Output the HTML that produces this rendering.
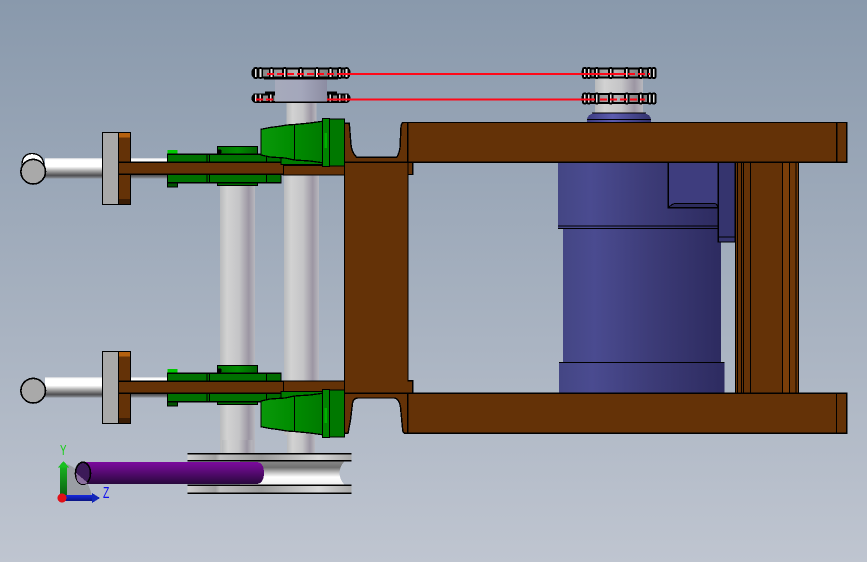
<!DOCTYPE html>
<html><head><meta charset="utf-8"><style>html,body{margin:0;padding:0;width:867px;height:562px;overflow:hidden}svg{display:block}</style></head><body>
<svg width="867" height="562" viewBox="0 0 867 562" xmlns="http://www.w3.org/2000/svg">
<defs>
<linearGradient id="bg" x1="0" y1="0" x2="0" y2="1"><stop offset="0" stop-color="#8999ac"/><stop offset="1" stop-color="#bfc5d0"/></linearGradient>
<linearGradient id="cyl" x1="0" y1="0" x2="1" y2="0"><stop offset="0" stop-color="#b8babc"/><stop offset=".2" stop-color="#d2d2d2"/><stop offset=".55" stop-color="#c4c4c6"/><stop offset=".82" stop-color="#9c96a3"/><stop offset="1" stop-color="#b8b8be"/></linearGradient>
<linearGradient id="hub" x1="0" y1="0" x2="1" y2="0"><stop offset="0" stop-color="#a6aabb"/><stop offset=".5" stop-color="#a4a7bb"/><stop offset="1" stop-color="#8c8ca2"/></linearGradient>
<linearGradient id="shaft" x1="0" y1="0" x2="0" y2="1"><stop offset="0" stop-color="#c8ccd2"/><stop offset=".08" stop-color="#fff"/><stop offset=".42" stop-color="#fff"/><stop offset=".62" stop-color="#aaa"/><stop offset=".85" stop-color="#4e4e50"/><stop offset="1" stop-color="#8d929a"/></linearGradient>
<linearGradient id="blue" x1="0" y1="0" x2="1" y2="0"><stop offset="0" stop-color="#444684"/><stop offset=".2" stop-color="#4a4b90"/><stop offset=".55" stop-color="#3d3c78"/><stop offset="1" stop-color="#2d2b60"/></linearGradient>
<linearGradient id="cap" x1="0" y1="0" x2="1" y2="0"><stop offset="0" stop-color="#3c3c80"/><stop offset=".4" stop-color="#5c5cb0"/><stop offset="1" stop-color="#32326c"/></linearGradient>
<linearGradient id="gr" x1="0" y1="0" x2="1" y2="0"><stop offset="0" stop-color="#0a980a"/><stop offset=".5" stop-color="#008c00"/><stop offset="1" stop-color="#007a00"/></linearGradient>
<linearGradient id="gt" x1="0" y1="0" x2="1" y2="0"><stop offset="0" stop-color="#007000"/><stop offset=".5" stop-color="#008a00"/><stop offset="1" stop-color="#006000"/></linearGradient>
<linearGradient id="pur" x1="0" y1="0" x2="0" y2="1"><stop offset="0" stop-color="#7c0a9e"/><stop offset=".3" stop-color="#660a84"/><stop offset="1" stop-color="#28083c"/></linearGradient>
<linearGradient id="spr" x1="0" y1="0" x2="1" y2="0"><stop offset="0" stop-color="#777"/><stop offset=".45" stop-color="#b5b5b5"/><stop offset=".8" stop-color="#777"/><stop offset="1" stop-color="#999"/></linearGradient>
<linearGradient id="fl" x1="0" y1="0" x2="1" y2="0"><stop offset="0" stop-color="#d0d0d0"/><stop offset=".17" stop-color="#a0a0a0"/><stop offset=".2" stop-color="#c0c0c0"/><stop offset=".45" stop-color="#9a9a9a"/><stop offset=".8" stop-color="#d8d8d8"/><stop offset="1" stop-color="#a8a8a8"/></linearGradient>
<linearGradient id="wh" x1="0" y1="0" x2="0" y2="1"><stop offset="0" stop-color="#8c8c8c"/><stop offset=".28" stop-color="#707070"/><stop offset=".5" stop-color="#c8c8c8"/><stop offset=".66" stop-color="#fff"/><stop offset="1" stop-color="#eee"/></linearGradient>
<linearGradient id="yax" x1="0" y1="0" x2="0" y2="1"><stop offset="0" stop-color="#18b020"/><stop offset="1" stop-color="#0a5a10"/></linearGradient>
<linearGradient id="zax" x1="0" y1="0" x2="0" y2="1"><stop offset="0" stop-color="#1428e0"/><stop offset="1" stop-color="#0a1480"/></linearGradient>
<g id="handle" stroke="#000" stroke-width="1.300">
<rect x="45" y="158" width="125" height="20.500" fill="url(#shaft)" stroke="none"/>
<rect x="102.500" y="132.500" width="16" height="72" fill="#a9a9a9"/>
<rect x="118.500" y="132.500" width="12" height="72" fill="#643207"/>
<rect x="119" y="133" width="11" height="4.500" fill="#b5610f" stroke="none"/>
<rect x="119" y="199" width="11" height="5" fill="#3b1d05" stroke="none"/>
<circle cx="33.200" cy="171.700" r="12.300" fill="#a9a9a9" stroke-width="1.600"/>
<rect x="217.500" y="146.500" width="40" height="8" fill="url(#gt)"/>
<rect x="217.500" y="182" width="40" height="3.500" fill="#006800"/>
<rect x="167.500" y="150" width="10" height="4.500" fill="#00c800" stroke="none"/>
<rect x="167.500" y="182.500" width="10" height="4.500" fill="#005200"/>
<rect x="167.500" y="154.300" width="99" height="28.400" fill="#007000"/>
<path d="M266.500,154.300H281V182.700H266.500Z" fill="#006b00"/>
<path d="M207,154V183M209.500,154V183" fill="none"/>
<rect x="118.500" y="162.300" width="165" height="12" fill="#643207"/>
<circle cx="219.500" cy="151.500" r="2.200" fill="#000" stroke="none"/>
</g>
<g id="bear" stroke="#000" stroke-width="1.300">
<path d="M281,158H325V164.500H281Z" fill="#007c00"/>
<path d="M261,129.300L270,127.500L278,126.500L287,125L294.500,124.500L310,123L324.300,121V163L310,161L294.500,160L285,158L270,157L261,155Z" fill="url(#gr)"/>
<path d="M294.500,124.500V160" fill="none"/>
<rect x="322.500" y="118.500" width="7" height="48" fill="#008400"/>
<rect x="329.500" y="119" width="15" height="47" fill="#007800"/>
<rect x="324.500" y="133" width="2.500" height="15" fill="#00b000" stroke="none"/>
</g>
<rect id="lk" x="-2" y="-5" width="3.500" height="10" rx="1" fill="#e4e4e4" stroke="#000" stroke-width="1.600"/>
</defs>
<rect width="867" height="562" fill="url(#bg)"/>
<g shape-rendering="crispEdges">

<!-- vertical shafts -->
<rect x="220" y="185" width="35" height="270" fill="url(#cyl)"/>
<rect x="222" y="440" width="30.500" height="20" fill="url(#cyl)"/>
<rect x="286.500" y="100" width="30" height="30" fill="url(#cyl)"/>
<rect x="284" y="150" width="35" height="285" fill="url(#cyl)"/>
<rect x="287" y="430" width="28" height="26" fill="url(#cyl)"/>

<!-- left sprockets -->
<rect x="252.500" y="94.500" width="97" height="7.500" rx="3.500" fill="url(#spr)" stroke="#000" stroke-width="2"/>
<g>
<use href="#lk" transform="translate(256,98) scale(1,.8)"/><use href="#lk" transform="translate(260.500,98) scale(1,.8)"/><use href="#lk" transform="translate(271,98) scale(1,.8)"/>
<use href="#lk" transform="translate(330.500,98) scale(1,.8)"/><use href="#lk" transform="translate(340,98) scale(1,.8)"/><use href="#lk" transform="translate(346.500,98) scale(1,.8)"/>
</g>
<path d="M265,92.500H275M327,92.500H337" stroke="#000" stroke-width="2" fill="none"/>
<rect x="275" y="78" width="52" height="24" fill="url(#hub)"/>
<path d="M275,102H327M264,78.500H338" stroke="#000" stroke-width="1.500" fill="none"/>
<rect x="252.500" y="68.500" width="97" height="9" rx="3.500" fill="url(#spr)" stroke="#000" stroke-width="2"/>
<use href="#lk" transform="translate(256,73)"/><use href="#lk" transform="translate(260.700,73)"/><use href="#lk" transform="translate(271.700,73)"/><use href="#lk" transform="translate(285,73)"/><use href="#lk" transform="translate(301,73)"/><use href="#lk" transform="translate(317.300,73)"/><use href="#lk" transform="translate(330.700,73)"/><use href="#lk" transform="translate(340,73)"/><use href="#lk" transform="translate(346.700,73)"/>

<!-- right hub and cap -->
<rect x="595" y="77" width="48" height="36" fill="url(#cyl)"/>
<path d="M587,122V119Q588,114 594,113.500H644Q650,114 651,119V122Z" fill="url(#cap)" stroke="none"/>
<path d="M592,113H646M587,119.500H651" stroke="#000" stroke-width="1.300" fill="none"/>
<rect x="582.500" y="68.500" width="73" height="9" rx="3.500" fill="url(#spr)" stroke="#000" stroke-width="2"/>
<use href="#lk" transform="translate(585,73)"/><use href="#lk" transform="translate(589,73)"/><use href="#lk" transform="translate(597,73)"/><use href="#lk" transform="translate(611,73)"/><use href="#lk" transform="translate(627,73)"/><use href="#lk" transform="translate(641,73)"/><use href="#lk" transform="translate(650,73)"/><use href="#lk" transform="translate(654,73)"/>
<rect x="582.500" y="94" width="73" height="9" rx="3.500" fill="url(#spr)" stroke="#000" stroke-width="2"/>
<use href="#lk" transform="translate(585,98.500)"/><use href="#lk" transform="translate(589,98.500)"/><use href="#lk" transform="translate(597,98.500)"/><use href="#lk" transform="translate(611,98.500)"/><use href="#lk" transform="translate(627,98.500)"/><use href="#lk" transform="translate(641,98.500)"/><use href="#lk" transform="translate(650,98.500)"/><use href="#lk" transform="translate(654,98.500)"/>

<!-- chain lines -->
<path d="M267,74H348M256,99.500H275M600,99.500H645M628,74H650" stroke="#ff0818" stroke-width="2" stroke-dasharray="7 3" fill="none"/>
<path d="M344,74H626M327,99.500H595" stroke="#ff0818" stroke-width="2" fill="none"/>

<!-- motor -->
<rect x="558" y="162" width="160.500" height="67" fill="url(#blue)"/>
<rect x="563" y="229" width="158" height="134" fill="url(#blue)"/>
<rect x="559" y="362.500" width="165.500" height="31" fill="url(#blue)"/>
<path d="M558,228.500H719M559,362.500H724.500" stroke="#000" stroke-width="1.300" fill="none"/>
<path d="M558,226H718" stroke="#000" stroke-width="1" fill="none"/>
<rect x="668.300" y="162" width="50" height="46" fill="#3e3d7e" stroke="#000" stroke-width="1.300"/>
<path d="M668.500,207.500Q672,204 675,203.500H715Q717,204 718,207.500Z" fill="#2d2c5c" stroke="#000" stroke-width="1"/>
<rect x="718.300" y="162" width="17" height="80" fill="#35346e" stroke="#000" stroke-width="1.300"/>
<path d="M718,237H735" stroke="#000" stroke-width="1" fill="none"/>

<!-- column -->
<rect x="735.500" y="162" width="63" height="231.500" fill="#643207" stroke="#000" stroke-width="1.300"/>
<rect x="782.500" y="162.500" width="7" height="231" fill="#7a3e09"/>
<rect x="790" y="162.500" width="8" height="231" fill="#6f3808"/>
<path d="M737.500,162V393M741.700,162V393M743.500,162V393M750.700,162V393M782.300,162V393M789.300,162V393M796,162V393" stroke="#000" stroke-width="1" fill="none"/>

<!-- connecting bars -->
<rect x="283" y="165.500" width="62" height="9.500" fill="#643207" stroke="#000" stroke-width="1.300"/>
<rect x="283" y="381" width="62" height="12" fill="#643207" stroke="#000" stroke-width="1.300"/>

<!-- frame -->
<path d="M344.500,123.300H349.300L351,145Q352,153 356.700,157.300H396.700Q399,154 400,148L401,126.700Q401.500,122.500 403.500,122.500H846.700V162.500H412.700V174.500H408V380.800H412.700V393.300H846.700V433.300H405Q403,433 402.700,430L400.500,407Q399,398 394,398H358Q353.500,398 352.500,403L350.500,420L348,433.300H344.500Z" fill="#643207" stroke="#000" stroke-width="1.400"/>
<path d="M344.500,162.300H408V381M344.500,393.300H408M407.700,122.500V162.300M407.700,393.300V433M408,162.300H846.700M408,393.300H846.700M836.700,122.500V162.500M836.500,393.300V433.300" stroke="#000" stroke-width="1.300" fill="none"/>

<!-- handles and bearings -->
<path d="M22,165 Q22,154 32,153.500 Q43,154 44,165Z" fill="#fff" stroke="#000" stroke-width="1.300"/>
<use href="#handle"/>
<use href="#handle" transform="translate(0,219)"/>
<use href="#bear"/>
<use href="#bear" transform="matrix(1 0 0 -1 0 556)"/>

<!-- pulley -->
<path d="M240,460.500H345Q334,473 345,485.500H240Z" fill="url(#wh)"/>
<rect x="187.500" y="453.500" width="164" height="7" fill="url(#fl)"/>
<rect x="187.500" y="485.500" width="164" height="7" fill="url(#fl)"/>
<path d="M187.500,453.500H351.500M187.500,460.700H351.500M187.500,485.300H351.500M187.500,493H351.500" stroke="#000" stroke-width="1.500" fill="none"/>

<!-- triad shadow -->
<path d="M64,463Q86,470 92,496H64Z" fill="#9a9ea4"/>

<!-- tube -->
<path d="M83,462H257Q264,463 264,473Q264,483 257,484H83Z" fill="url(#pur)"/>
<ellipse cx="83" cy="473.300" rx="7.500" ry="11" fill="#3c1a58" stroke="#000" stroke-width="1.600"/>
<path d="M76,473L88,483Q80,486 77,480Z" fill="#8b6f9e"/>

<!-- triad -->
<path d="M60,498V467H67V498Z" fill="url(#yax)"/>
<path d="M58,467.500L63.500,461L69,467.500Z" fill="#18c020"/>
<path d="M63,495H92V501H63Z" fill="url(#zax)"/>
<path d="M92,493L100,498L92,503Z" fill="#1428b8"/>
<circle cx="62" cy="498" r="4.500" fill="#e01018"/>
</g>
<text transform="translate(60,455) scale(.65,1)" font-family="'Liberation Sans',sans-serif" font-size="15" fill="#10d010">Y</text>
<text transform="translate(103,498) scale(.65,1)" font-family="'Liberation Sans',sans-serif" font-size="16" fill="#1010ee">Z</text>
</svg>
</body></html>
